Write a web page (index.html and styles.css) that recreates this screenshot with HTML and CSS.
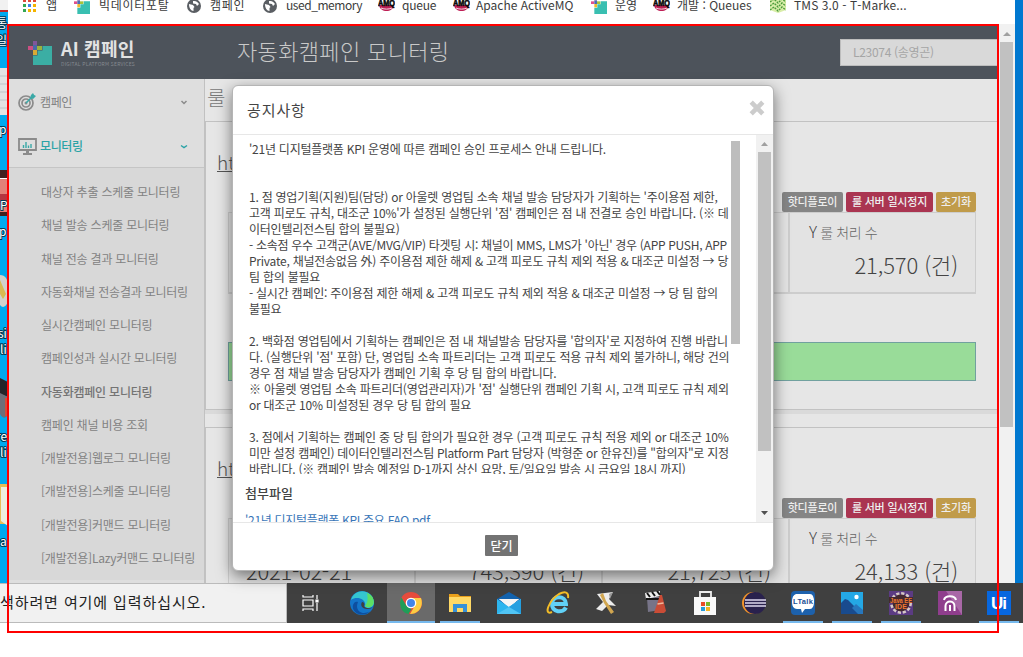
FILE: index.html
```html
<!DOCTYPE html>
<html lang="ko">
<head>
<meta charset="utf-8">
<title>자동화캠페인 모니터링</title>
<link rel="stylesheet" href="styles.css">
</head>
<body>
<svg width="0" height="0" class="defs">
  <symbol id="brand" viewBox="0 0 24 24"><path fill="#39bfb1" d="M14.500 5H24v19H5v-9.500h4.500V9.500h5z"/><path fill="#8b57a5" d="M5 0h4v4H5z"/><path fill="#e04f8b" d="M0 5h5v4H0z"/><path fill="#4a6db5" d="M5 4h4v5H5z"/><path fill="#a8c23a" d="M9 5h5v4H9z"/><path fill="#f2ba2d" d="M5 9h4v5H5z"/></symbol>
  <symbol id="globe" viewBox="0 0 14 14"><circle cx="7" cy="7" r="7" fill="#5a5e63"/><path d="M2 5l4 1 1.500 2-1 1 0 3C4 12 2 9 2 5zM6 2c3-.5 5 1 6 3l-2 2-1-2-3-.5z" fill="#fff"/></symbol>
  <symbol id="amq" viewBox="0 0 17 16"><path fill="#be1f55" d="M1 9h15c-1 8-14 8-15 0z"/><path d="M3 12c4 1.500 7 1.500 11 0" stroke="#f4d8df" fill="none"/><text x="0" y="10" font-size="8.500" font-weight="900" font-family="Liberation Sans, sans-serif" textLength="17" lengthAdjust="spacingAndGlyphs" stroke="#111" stroke-width=".6">AMQ</text></symbol>
</svg>
<div class="screen">
  <div class="desktop">
    <svg class="shortcuts" width="8" height="583">
      <path fill="#f1f1f1" d="M0 0h8v11H0z"/><path fill="#c22a2a" d="M0 10h8v2H0z"/>
      <path fill="#e3e3e3" d="M0 68h8v47H0z"/><path stroke="#bfc5c8" d="M0 76h8M0 84h8M0 92h8M0 100h8M0 108h8"/>
      <path fill="#42211f" d="M0 170h8v46H0z"/><path fill="#e28178" d="M0 178h8v34H0z"/><path stroke="#fff" d="M0 178.500h8"/><path fill="#b53540" d="M0 194h8v9H0z"/>
      <path fill="#d2d2cb" d="M0 275q8 0 8 12v15q-4 8-8 3z"/><path fill="#d9bb50" d="M0 280l6 14-3 5-3-5z"/>
      <path fill="#242429" d="M0 378l8 4v15l-8-3z"/><path fill="#6e6e79" d="M0 393l8 4v18q-4 6-8-1z"/><path fill="#d44a39" d="M5 398h3v18H5z"/>
      <path fill="#e8bd55" d="M0 484h8v40H0z"/><path fill="#eeeede" d="M1 487h7v39l-7-5z"/>
      <g class="shortcut-label"><text x="-4" y="28">통</text><text x="-4" y="45">일</text><text x="-1" y="134">p</text><text x="0" y="210">P</text><text x="-1" y="236">p</text><text x="-2" y="338">si</text><text x="0" y="354">li</text><text x="-4" y="441">re</text><text x="0" y="457">li</text><text x="0" y="546">a</text></g>
    </svg>
    <div class="browser">
      <div class="bookmarks">
        <svg class="bm-apps" width="14" height="14"><g><path fill="#e0483a" d="M0 0h3v3H0zM5 0h3v3H5zM10 0h3v3h-3z"/><path fill="#34a853" d="M0 5h3v3H0zM0 10h3v3H0z"/><path fill="#3c83ec" d="M5 5h3v3H5z"/><path fill="#f4b400" d="M10 5h3v3h-3zM5 10h3v3H5zM10 10h3v3h-3z"/></g></svg>
        <span class="bm bm-1">앱</span>
        <svg class="bm-i2" width="16" height="16"><use href="#brand"/></svg><span class="bm bm-2">빅데이터포탈</span>
        <svg class="bm-i3" width="14" height="14"><use href="#globe"/></svg><span class="bm bm-3">캠페인</span>
        <svg class="bm-i4" width="14" height="14"><use href="#globe"/></svg><span class="bm bm-4">used_memory</span>
        <svg class="bm-i5" width="17" height="16"><use href="#amq"/></svg><span class="bm bm-5">queue</span>
        <svg class="bm-i6" width="17" height="16"><use href="#amq"/></svg><span class="bm bm-6">Apache ActiveMQ</span>
        <svg class="bm-i7" width="16" height="16"><use href="#brand"/></svg><span class="bm bm-7">운영</span>
        <svg class="bm-i8" width="17" height="16"><use href="#amq"/></svg><span class="bm bm-8">개발 : Queues</span>
        <svg class="bm-i9" width="16" height="14"><path fill="#d8eda8" d="M0 0h16v11l-8 3-8-3z"/><path d="M0 3l4-3 4 4 4-4 4 3M0 7l4-3 4 4 4-4 4 3M0 11l4-3 4 4 4-4 4 3" fill="none" stroke="#4a9b3a" stroke-width="1.400" stroke-dasharray="2 1"/></svg><span class="bm bm-9">TMS 3.0 - T-Marke...</span>
      </div>
      <div class="page">
        <div class="app">
          <header class="topbar">
            <svg class="logo" width="24" height="24"><use href="#brand"/></svg>
            <div class="brand"><b>AI 캠페인</b><small>DIGITAL PLATFORM SERVICES</small></div>
            <h1>자동화캠페인 모니터링</h1>
            <div class="user">L23074 (송영곤)</div>
          </header>
          <div class="columns">
            <nav class="sidebar">
              <div class="menu"><svg width="19" height="19" viewBox="0 0 19 19" fill="none"><g stroke="#8b8b8b" stroke-width="1.700"><circle cx="8" cy="10" r="7"/><circle cx="8" cy="10" r="4"/></g><circle cx="8" cy="10" r="1.500" fill="#8b8b8b"/><path d="M8 10l8-8" stroke="#3aa9a7" stroke-width="1.600"/><path d="M12 5l1-3 2-2 1 2 2 1-3 3z" fill="#3aa9a7"/></svg><span class="m1">캠페인</span><svg class="chev" width="8" height="5"><path d="M1.500 1L4 3.500 6.500 1" fill="none" stroke="#8b8b8b" stroke-width="1.500"/></svg></div>
              <div class="menu current"><svg width="19" height="18" viewBox="0 0 19 18" fill="none"><path d="M1 1h17v11H1zM5 16h9" stroke="#8b8b8b" stroke-width="1.800"/><path d="M8 12h3v4H8z" fill="#8b8b8b"/><path d="M5.500 10V7M8 10V4M10.500 10V7.500M13 10V6" stroke="#3aa9a7" stroke-width="1.400"/></svg><span class="m2">모니터링</span><svg class="chev" width="8" height="5"><path d="M1 1.500l3 2 3-2" fill="none" stroke="#2ba3a6" stroke-width="1.500"/></svg></div>
              <ul class="submenu">
                <li>대상자 추출 스케줄 모니터링</li><li>채널 발송 스케줄 모니터링</li><li>채널 전송 결과 모니터링</li><li>자동화채널 전송결과 모니터링</li><li>실시간캠페인 모니터링</li><li>캠페인성과 실시간 모니터링</li><li class="here">자동화캠페인 모니터링</li><li>캠페인 채널 비용 조회</li><li>[개발전용]웹로그 모니터링</li><li>[개발전용]스케줄 모니터링</li><li>[개발전용]커맨드 모니터링</li><li>[개발전용]Lazy커맨드 모니터링</li>
              </ul>
            </nav>
            <main>
              <h2>룰</h2>
              <section class="panel">
                <a class="server">ht</a>
                <div class="actions"><span class="badge gray">핫디플로이</span><span class="badge red">룰 서버 일시정지</span><span class="badge gold">초기화</span></div>
                <div class="cards"><div class="card"></div><div class="card"></div><div class="card"></div><div class="card"><label><i>Y</i> 룰 처리 수</label><strong>21,570 (건)</strong></div></div>
                <div class="status"></div>
              </section>
              <section class="panel">
                <a class="server">ht</a>
                <div class="actions"><span class="badge gray">핫디플로이</span><span class="badge red">룰 서버 일시정지</span><span class="badge gold">초기화</span></div>
                <div class="cards"><div class="card date"><label></label><strong>2021-02-21</strong></div><div class="card"><label></label><strong>743,390 (건)</strong></div><div class="card"><label></label><strong>21,725 (건)</strong></div><div class="card"><label><i>Y</i> 룰 처리 수</label><strong>24,133 (건)</strong></div></div>
              </section>
            </main>
          </div>
        </div>
        <div class="scroll outer"><svg width="16" height="17"><path d="M4 12h8l-4-4z" fill="#a0a0a0"/></svg><div class="thumb"></div></div>
      </div>
    </div>
  </div>
  <footer class="taskbar">
    <div class="search">색하려면 여기에 입력하십시오.</div>
    <div class="tasks">
      <div class="task tv"><svg viewBox="0 0 24 24" fill="none" stroke="#fff" stroke-width="1.200"><path d="M4 4v2h10V4M4 20v-2h10v2M4 9h10v6H4zM18 4v4M18 12v8"/><path fill="#fff" d="M17 9h2v2h-2z"/></svg></div>
      <div class="task"><svg viewBox="0 0 24 24"><circle cx="12" cy="12" r="12" fill="#1475c9"/><path fill="#35c6cf" d="M1 9C4-3 22-3 24 11c0 6-6 7-9 5 2-9-9-11-14-7z"/><path fill="#5ddf64" d="M17 2c6 2 8 8 6 12-2 3-6 3-8 1 3-4 3-7 2-13z"/><path fill="#0e4f9f" d="M8 11c-4 9 5 14 12 9-5 7-19 3-17-6 1-3 3-4 5-3z"/><path fill="#404040" d="M12 11c-2 3 0 7 5 7 3 0 5-1 6-2-3 2-9 1-9-1 1-2 0-4-2-4z"/></svg></div>
      <div class="task active open"><svg viewBox="0 0 24 24"><circle cx="12" cy="12" r="11" fill="#e64b3c"/><path d="M2.500 6.500l5 8.500 5 3-3 5C2 22-1 13 2.500 6.500z" fill="#1f9d59"/><path d="M12 7h10c3 8-2 16-11 16l5-8.500z" fill="#fccd43"/><circle cx="12" cy="12" r="5.300" fill="#fff"/><circle cx="12" cy="12" r="4" fill="#4285e9"/></svg></div>
      <div class="task open folder"><svg viewBox="0 0 24 24"><path fill="#e9a01b" d="M1 3h9l2 2h11v6H1z"/><path fill="#ffd966" d="M1 6h22v15H1z"/><path fill="#3691d9" d="M5 21v-8h14v8h-4v-4H9v4z"/></svg></div>
      <div class="task"><svg viewBox="0 0 24 24"><path fill="#1262ad" d="M0 8l12-7 12 7v9H0z"/><path fill="#f5f5f5" d="M2 8h20l-10 9z"/><path fill="#2db5ee" d="M0 8l12 8 12-8v15H0z"/><path fill="#f5f5f5" d="M2 8h20l-10 7z"/><path fill="#50c5f5" d="M0 23l12-7L24 8v15z"/><path fill="#249fe0" d="M12 16l12 7V8z"/></svg></div>
      <div class="task"><svg viewBox="0 0 24 24" fill="none"><path d="M20 16.500c-3 6-14 5-14-3.500 0-9 14-9 14 0H8" stroke="#61d1f7" stroke-width="4"/><path d="M6 21c-9 4-3-12 7-18 6-3 10-2 9 4" stroke="#f4bd27" stroke-width="2"/></svg></div>
      <div class="task"><svg viewBox="0 0 24 24"><path fill="#ededed" d="M2 3l16-2-4 7 7 7-8-1-6 6-6-2 7-7z"/><path fill="#d1a650" d="M8 2l3 8 8 11-3 2L9 12 5 4z"/><path fill="#989898" d="M14 3l4-2-3 7z"/></svg></div>
      <div class="task"><svg viewBox="0 0 24 24"><path fill="#777488" d="M3 6h13v13l-12 2z"/><path fill="#eee" d="M1 2l15-2v5L2 8z"/><path stroke="#161616" stroke-width="2" d="M3 2l3 4M8 1l3 4M13 0l3 4M2 8h14"/><path fill="#ca4c36" d="M16 4h2l4 16-2 2H10z"/><path stroke="#f1b99d" stroke-width="1.500" d="M13.500 13l6-1"/></svg></div>
      <div class="task"><svg viewBox="0 0 24 24"><path d="M7 7V1h11v6" fill="none" stroke="#eee" stroke-width="1.800"/><path fill="#f8f8f8" d="M1 6h22v18H1z"/><path fill="#e94b27" d="M8 11h4v4H8z"/><path fill="#79b72a" d="M13 11h4v4h-4z"/><path fill="#269bda" d="M8 16h4v4H8z"/><path fill="#f5b420" d="M13 16h4v4h-4z"/></svg></div>
      <div class="task"><svg viewBox="0 0 24 24"><circle cx="11" cy="12" r="11" fill="#f19329"/><circle cx="13" cy="12" r="11" fill="#29214d"/><path stroke="#ddd8ed" stroke-width="1.600" d="M3 9h21M3 12h21M3 15h21"/></svg></div>
      <div class="task open"><svg viewBox="0 0 24 24"><rect width="24" height="24" rx="4" fill="#1d61ac"/><path fill="#fff" d="M5 3h14q4 0 4 8t-6 7h-3l-3 4-1-4H6q-5 0-5-7t4-8z"/><text x="2" y="13" font-family="Liberation Sans, sans-serif" font-weight="700" font-size="7.500" fill="#194f96" textLength="20">LTalk</text></svg></div>
      <div class="task open"><svg viewBox="0 0 24 24"><path fill="#24a8e5" d="M1 1h22v22H1z"/><path fill="#194b8e" d="M1 12l4-4 3 1 14 14H1z"/><path fill="#2777bd" d="M12 17l4-4 7 6v4h-5z"/><circle cx="16.500" cy="6" r="2.200" fill="#fff"/></svg></div>
      <div class="task open"><svg viewBox="0 0 24 24"><path fill="#5b3b83" d="M0 0h24v24H0z"/><circle cx="12" cy="12" r="9" fill="none" stroke="#d6c9c7" stroke-width="4" stroke-dasharray="3 1.700"/><circle cx="12" cy="12" r="8.500" fill="#43282f"/><path fill="#43282f" d="M0 6h24v6H0z"/><text x="1" y="11.500" textLength="22" lengthAdjust="spacingAndGlyphs" font-family="Liberation Sans, sans-serif" font-weight="700" font-size="7" fill="#ef7930">Java EE</text><text x="6" y="18" textLength="12" font-family="Liberation Sans, sans-serif" font-weight="700" font-size="7" fill="#ef7930">IDE</text></svg></div>
      <div class="task"><svg viewBox="0 0 24 24"><path fill="#8f3e8d" d="M0 0h24v24H0z"/><path fill="#a968a7" d="M24 0v24L8 0z"/><path d="M7.500 20v-5c0-6 9-6 9 0v5M12 14v6M6 9c1-5 11-5 12 0" fill="none" stroke="#fff" stroke-width="2"/></svg></div>
      <div class="task open"><svg viewBox="0 0 24 24"><path fill="#0767df" d="M0 0h24v24H0z"/><text x="4" y="18" font-family="Liberation Sans, sans-serif" font-size="17" font-weight="700" fill="#fff" textLength="16">Ui</text></svg></div>
    </div>
  </footer>
  <div class="modal">
    <div class="modal-head"><span>공지사항</span><svg width="16" height="16"><path d="M2.200 2.200l11.600 11.600M13.800 2.200L2.200 13.800" stroke="#ccc" stroke-width="4.600"/></svg></div>
    <div class="modal-body">
      <div class="content">
        <div class="notice">
          <div class="lines">
            <p>'21년 디지털플랫폼 KPI 운영에 따른 캠페인 승인 프로세스 안내 드립니다.</p><p></p><p></p>
            <p>1. 점 영업기획(지원)팀(담당) or 아울렛 영업팀 소속 채널 발송 담당자가 기획하는 '주이용점 제한,</p>
            <p>고객 피로도 규칙, 대조군 10%'가 설정된 실행단위 '점' 캠페인은 점 내 전결로 승인 바랍니다. (※ 데</p>
            <p>이터인텔리전스팀 합의 불필요)</p>
            <p class="tight">- 소속점 우수 고객군(AVE/MVG/VIP) 타겟팅 시: 채널이 MMS, LMS가 '아닌' 경우 (APP PUSH, APP</p>
            <p>Private, 채널전송없음 外) 주이용점 제한 해제 &amp; 고객 피로도 규칙 제외 적용 &amp; 대조군 미설정 → 당</p>
            <p>팀 합의 불필요</p>
            <p>- 실시간 캠페인: 주이용점 제한 해제 &amp; 고객 피로도 규칙 제외 적용 &amp; 대조군 미설정 → 당 팀 합의</p>
            <p>불필요</p><p></p>
            <p class="loose">2. 백화점 영업팀에서 기획하는 캠페인은 점 내 채널발송 담당자를 '합의자'로 지정하여 진행 바랍니</p>
            <p>다. (실행단위 '점' 포함) 단, 영업팀 소속 파트리더는 고객 피로도 적용 규칙 제외 불가하니, 해당 건의</p>
            <p>경우 점 채널 발송 담당자가 캠페인 기획 후 당 팀 합의 바랍니다.</p>
            <p>※ 아울렛 영업팀 소속 파트리더(영업관리자)가 '점' 실행단위 캠페인 기획 시, 고객 피로도 규칙 제외</p>
            <p>or 대조군 10% 미설정된 경우 당 팀 합의 필요</p><p></p>
            <p>3. 점에서 기획하는 캠페인 중 당 팀 합의가 필요한 경우 (고객 피로도 규칙 적용 제외 or 대조군 10%</p>
            <p class="tight">미만 설정 캠페인) 데이터인텔리전스팀 Platform Part 담당자 (박형준 or 한유진)를 "합의자"로 지정</p>
            <p>바랍니다. (※ 캠페인 발송 예정일 D-1까지 상신 요망, 토/일요일 발송 시 금요일 18시 까지)</p>
          </div>
          <div class="bar"></div>
        </div>
        <h3>첨부파일</h3>
        <a class="file">'21년 디지털플랫폼 KPI 주요 FAQ.pdf</a>
      </div>
      <div class="scroll inner"><svg width="17" height="17"><path d="M5 11h7l-3.500-4z" fill="#a0a0a0"/></svg><div class="thumb"></div><svg width="17" height="17"><path d="M5 6h7l-3.500 4z" fill="#505050"/></svg></div>
    </div>
    <div class="modal-foot"><button>닫기</button></div>
  </div>
  <div class="frame"></div>
</div>
</body>
</html>
```
FILE: styles.css
```css
* { box-sizing: border-box; }
body { margin: 0; background: #fff; font-family: "Noto Sans CJK KR", sans-serif; }
h1, h2, h3, p, ul { margin: 0; padding: 0; font-weight: 400; }
svg { display: block; flex: none; }
.defs { position: absolute; }
.screen { position: relative; width: 1023px; height: 657px; overflow: hidden; background: #fff; }
.desktop { display: flex; height: 583px; background: linear-gradient(90deg, #00a9ef 0 8px, #0078d0 1015px); }
.shortcuts { width: 8px; overflow: hidden; }
.shortcut-label { fill: #fff; font-size: 12px; stroke: #033b56; stroke-width: 2px; paint-order: stroke; }
.browser { width: 1007px; height: 583px; background: #fff; }

.bookmarks { display: flex; align-items: flex-start; height: 24px; overflow: hidden; }
.bm { flex: none; font-size: 12px; line-height: 18px; margin-top: -4px; color: #3c3c3c; white-space: nowrap; }
.bm-apps { margin-left: 15px; margin-top: -1px; }
.bm-1 { width: 12px; margin-left: 9px; }
.bm-i2 { margin: -2px 0 0 16px; }
.bm-2 { width: 71px; margin-left: 9px; letter-spacing: .7px; }
.bm-i3 { margin: -1px 0 0 17px; }
.bm-3 { width: 36px; margin-left: 9px; letter-spacing: .7px; }
.bm-i4 { margin: -1px 0 0 17px; }
.bm-4 { width: 77px; margin-left: 9px; letter-spacing: -.45px; }
.bm-i5 { margin: -4px 0 0 15px; }
.bm-5 { width: 34px; margin-left: 7px; letter-spacing: -.2px; }
.bm-i6 { margin: -4px 0 0 17px; }
.bm-6 { width: 99px; margin-left: 6px; }
.bm-i7 { margin: -2px 0 0 16px; }
.bm-7 { width: 24px; margin-left: 8px; }
.bm-i8 { margin: -4px 0 0 14px; }
.bm-8 { width: 77px; margin-left: 7px; }
.bm-i9 { margin: -1px 0 0 16px; }
.bm-9 { width: 115px; margin-left: 8px; letter-spacing: .1px; }

.page { display: flex; height: 559px; }
.app { width: 991px; overflow: hidden; }
.topbar { display: flex; height: 55px; background: #4d535b; color: #c9c9c9; }
.logo { margin: 17px 0 0 20px; opacity: .85; }
.brand { flex: none; width: 185px; padding: 11px 0 0 9px; }
.brand b { display: block; font-size: 18px; line-height: 26px; letter-spacing: .2px; color: #e2e2e2; }
.brand small { display: block; width: 78px; font-size: 5px; line-height: 6px; letter-spacing: .2px; white-space: nowrap; color: #858a90; }
h1 { flex: none; width: 603px; font-size: 22px; line-height: 52px; font-weight: 300; letter-spacing: .35px; }
.user { flex: none; width: 160px; height: 27px; margin-top: 15px; padding-left: 12px; border: 1px solid #bdbdbd; background: #d9d9d9; color: #a5a5a5; font-size: 12px; line-height: 24px; letter-spacing: -.3px; }
.columns { display: flex; height: 504px; }
.sidebar { width: 198px; flex: none; border-right: 2px solid #c1c1c1; background: #dedede; font-size: 12px; color: #777; }
.menu { display: flex; align-items: center; height: 44px; padding: 3px 16px 0 10px; }
.menu span { margin: -2px 0 0 3px; flex: 1; color: #818181; font-weight: 400; letter-spacing: -.4px; }
.menu.current { border-bottom: 1px solid #c5c5c5; height: 45px; }
.menu.current span { color: #2ba3a6; font-weight: 500; }
.submenu { height: 412px; padding: 7px 0 0 33px; list-style: none; background: #d8d8d8; }
.submenu li { height: 33.270px; line-height: 33px; white-space: nowrap; letter-spacing: -.22px; color: #828282; }
.submenu .here { color: #747474; font-weight: 500; }
main { flex: 1; margin-left: -1px; background: #e6e6e6; }
h2 { height: 42px; padding-left: 2px; font-size: 20px; line-height: 37px; font-weight: 300; color: #777; }
.panel { height: 289px; margin-bottom: 17px; padding: 31px 23px 0 22px; border: 1px solid #c2c2c2; border-width: 1px 0 1px 1px; box-shadow: 0 4px 0 #dadada; }
.server { display: block; width: 30px; height: 24px; margin-left: -11px; font-size: 19px; line-height: 18px; font-weight: 300; color: #555; text-decoration: underline; }
.actions { display: flex; justify-content: flex-end; gap: 3px; height: 20px; margin-top: 15px; }
.badge { height: 20px; border-radius: 2px; color: #eee; font-size: 11px; font-weight: 500; line-height: 19px; text-align: center; white-space: nowrap; letter-spacing: -.2px; }
.gray { width: 61px; background: #858585; }
.red { width: 87px; background: #aa3551; }
.gold { width: 40px; background: #c09b4a; }
.cards { display: grid; grid-template-columns: 187px 187px 187px 187px; height: 82px; }
.card { display: flex; flex-direction: column; padding: 6px 17px 0; border: 1px solid #cdcdcd; border-bottom-width: 2px; background: #e3e3e3; white-space: nowrap; }
.card label { height: 26px; padding-left: 2px; font-size: 14px; line-height: 25px; font-weight: 300; color: #666; letter-spacing: -.4px; }
.card i { font-style: normal; font-size: 16px; color: #444; }
.card strong { font-size: 22px; font-weight: 300; line-height: 39px; text-align: right; color: #444; letter-spacing: -.1px; }
.date strong { text-align: left; letter-spacing: -.3px; }
.status { height: 39px; margin-top: 48px; border: 1px solid #71a19f; background: #99dc99; }
.scroll { display: flex; flex-direction: column; background: #f1f1f1; }
.outer { width: 16px; }
.outer .thumb { width: 13px; height: 385px; margin: 1px; background: #c1c1c1; }

.taskbar { display: flex; height: 40px; background: #404040; }
.search { width: 287px; height: 40px; border: 1px solid #bbb; border-width: 1px 1px 1px 0; background: #f1f1f1; color: #222; font-size: 15px; line-height: 36px; letter-spacing: .9px; white-space: nowrap; }
.tasks { display: flex; gap: 1px; padding-left: 2px; }
.task { display: flex; align-items: center; justify-content: center; width: 48px; height: 40px; }
.task svg { width: 24px; height: 24px; }
.tv { padding-right: 4px; }
.active { background: #6a6a6a; }
.open { background-image: linear-gradient(#76b9ed, #76b9ed); background-size: 40px 2px; background-position: center bottom; background-repeat: no-repeat; }
.active.open { background-size: 48px 2px; }

.modal { position: absolute; left: 232px; top: 85px; width: 542px; height: 486px; border: 1px solid #b5b5b5; border-radius: 6px; background: #fff; box-shadow: 0 5px 15px rgba(0,0,0,.5); color: #444; }
.modal-head { display: flex; justify-content: space-between; height: 49px; padding: 14px 8px 0 14px; border-bottom: 1px solid #e7e7e7; font-size: 15px; line-height: 20px; letter-spacing: .9px; }
.modal-body { display: flex; height: 387px; overflow: hidden; }
.content { width: 523px; padding: 6px 0 0 12px; overflow: hidden; }
.notice { display: flex; height: 333px; overflow: hidden; }
.lines { width: 486px; padding-left: 4px; font-size: 12px; }
.lines p { height: 16px; line-height: 16px; white-space: nowrap; letter-spacing: -.24px; }
.lines .tight { letter-spacing: -.29px; }
.lines .loose { letter-spacing: -.16px; }
.bar { width: 9px; height: 203px; background: #bdbdbd; }
h3 { height: 36px; font-size: 13px; line-height: 38px; font-weight: 500; }
.file { display: block; font-size: 12px; line-height: 20px; color: #3976b8; white-space: nowrap; letter-spacing: -.3px; }
.inner { width: 17px; height: 387px; }
.inner .thumb { width: 13px; height: 299px; margin: 0 0 54px 2px; background: #c1c1c1; }
.modal-foot { display: flex; justify-content: center; padding-top: 12px; height: 48px; border-top: 1px solid #e7e7e7; }
.modal-foot button { width: 33px; height: 21px; margin-right: 3px; padding: 0; border: 0; border-radius: 1px; background: #737373; color: #fff; font: 500 12px/19px "Noto Sans CJK KR", sans-serif; }
.frame { position: absolute; left: 7px; top: 24px; width: 992px; height: 609px; border: 2px solid #f00; }
```
